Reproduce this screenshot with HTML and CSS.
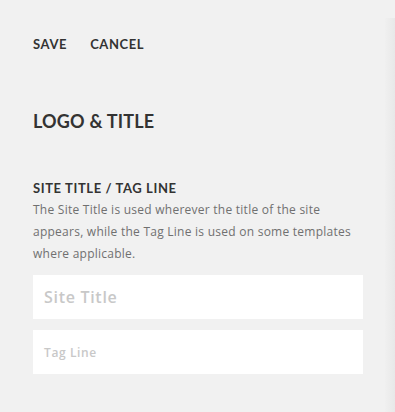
FILE: index.html
```html
<!DOCTYPE html>
<html>
<head>
<meta charset="utf-8">
<link rel="stylesheet" href="styles.css">
</head>
<body>
<div class="panel">
  <div class="actions">
    <span class="action">SAVE</span>
    <span class="action">CANCEL</span>
  </div>
  <h1 class="title">LOGO &amp; TITLE</h1>
  <h2 class="label">SITE TITLE / TAG LINE</h2>
  <p class="desc">The Site Title is used wherever the title of the site appears, while the Tag Line is used on some templates where applicable.</p>
  <div class="field field-lg">Site Title</div>
  <div class="field field-sm">Tag Line</div>
</div>
<div class="edge"></div>
</body>
</html>
```
FILE: styles.css
```css
html, body {
  margin: 0;
  padding: 0;
  width: 395px;
  height: 412px;
  overflow: hidden;
  background: #f1f1f1;
  font-family: Lato, "Liberation Sans", sans-serif;
}
body {
  display: flex;
}
.panel {
  flex: 1;
  padding: 36px 0 0 33px;
  box-sizing: border-box;
}
.edge {
  width: 10px;
  margin-top: 18px;
  background: linear-gradient(to right, #f0f0f0, #e8e8e8);
}
.actions {
  display: flex;
  gap: 23px;
}
.action {
  font-size: 13px;
  font-weight: 700;
  color: #333;
  letter-spacing: 0.6px;
  line-height: 16px;
}
.title {
  margin: 58px 0 0;
  font-size: 18px;
  font-weight: 700;
  color: #333;
  letter-spacing: 0.2px;
  line-height: 22px;
}
.label {
  margin: 48px 0 0;
  font-size: 13px;
  font-weight: 700;
  color: #333;
  letter-spacing: 0.6px;
  line-height: 16px;
}
.desc {
  margin: 3px 0 0;
  width: 322px;
  font-family: "Open Sans", "Liberation Sans", sans-serif;
  font-size: 12px;
  color: #707070;
  line-height: 22px;
  letter-spacing: 0.25px;
}
.field {
  width: 330px;
  height: 44px;
  background: #fff;
  box-sizing: border-box;
  padding-left: 11px;
  display: flex;
  align-items: center;
  color: #c8c8c8;
  font-family: "Open Sans", "Liberation Sans", sans-serif;
  font-weight: 600;
}
.field-lg {
  margin-top: 10px;
  font-size: 16px;
  letter-spacing: 0.7px;
}
.field-sm {
  margin-top: 11px;
  font-size: 12px;
  letter-spacing: 0.6px;
}
```
